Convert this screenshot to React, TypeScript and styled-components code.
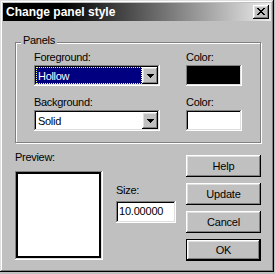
import React from "react";
import styled, { createGlobalStyle, css } from "styled-components";

const GlobalStyle = createGlobalStyle`
  html, body { margin: 0; padding: 0; background: #c0c0c0; }
  body { font-family: "Liberation Sans", Arial, sans-serif; font-size: 11px; color: #000; }
  * { box-sizing: border-box; }
`;

const raised = css`
  box-shadow: inset -1px -1px #000, inset 1px 1px #fff, inset -2px -2px #808080, inset 2px 2px #dfdfdf;
`;
const sunken = css`
  box-shadow: inset -1px -1px #fff, inset 1px 1px #808080, inset -2px -2px #dfdfdf, inset 2px 2px #000;
`;

const Window = styled.div`
  width: 274px;
  height: 272px;
  padding: 3px;
  background: #c0c0c0;
  box-shadow: inset -1px -1px #000, inset 1px 1px #dfdfdf, inset -2px -2px #808080, inset 2px 2px #fff;
  display: flex;
  flex-direction: column;
`;

const TitleBar = styled.div`
  height: 18px;
  display: flex;
  align-items: center;
  justify-content: space-between;
  padding: 0 2px 0 3px;
  background: linear-gradient(to right, #000 0%, #000 22%, #ececec 100%);
`;

const Title = styled.span`
  color: #fff;
  font: bold 12px/18px "Liberation Sans", Arial, sans-serif;
`;

const CloseButton = styled.div`
  width: 16px;
  height: 14px;
  background: #c0c0c0;
  ${raised};
  display: flex;
  align-items: center;
  justify-content: center;
  padding: 0 1px 1px 0;
`;

const Body = styled.div`
  padding: 21px 12px 0 12px;
  display: flex;
  flex-direction: column;
`;

const Group = styled.div`
  position: relative;
  width: 246px;
  height: 101px;
  border: 1px solid #808080;
  box-shadow: inset 1px 1px #fff, 1px 1px #fff;
  padding: 8px 0 0 18px;
`;

const Legend = styled.span`
  position: absolute;
  top: -9px;
  left: 5px;
  padding: 0 2px;
  background: #c0c0c0;
  line-height: 13px;
  letter-spacing: -0.3px;
`;

const FieldGrid = styled.div`
  display: grid;
  grid-template-columns: 126px 56px;
  column-gap: 26px;
  row-gap: 10px;
`;

const Field = styled.div<{ $gap?: number }>`
  display: flex;
  flex-direction: column;
  gap: ${(p) => p.$gap ?? 1}px;
`;

const Label = styled.span`
  display: block;
  height: 13px;
  line-height: 13px;
  letter-spacing: -0.3px;
  white-space: nowrap;
`;

const Combo = styled.div`
  width: 126px;
  height: 21px;
  padding: 2px;
  background: #fff;
  ${sunken};
  display: flex;
`;

const ComboValue = styled.div<{ $selected?: boolean }>`
  flex: 1;
  display: flex;
  align-items: center;
  padding-left: 1px;
  letter-spacing: -0.3px;
  border: 1px ${(p) => (p.$selected ? "dotted #ffff80" : "solid transparent")};
  background: ${(p) => (p.$selected ? "#000080" : "#fff")};
  color: ${(p) => (p.$selected ? "#fff" : "#000")};
`;

const DropButton = styled.div`
  width: 16px;
  background: #c0c0c0;
  ${raised};
  display: flex;
  align-items: center;
  justify-content: center;
  padding-top: 1px;
`;

const Swatch = styled.div<{ $color: string }>`
  width: 56px;
  height: 21px;
  background: ${(p) => p.$color};
  ${sunken};
`;

const BottomRow = styled.div`
  margin-top: 8px;
  display: grid;
  grid-template-columns: 91px 60px 75px;
  column-gap: 10px;
`;

const PreviewFrame = styled.div`
  width: 88px;
  height: 89px;
  padding: 2px;
  background: #fff;
  ${sunken};
  display: flex;
`;

const PreviewPanel = styled.div`
  flex: 1;
  border: 1px solid #000;
  border-right-width: 2px;
  border-bottom-width: 2px;
  background: #fff;
`;

const SizeColumn = styled(Field)`
  padding-top: 33px;
`;

const TextField = styled.div`
  width: 60px;
  height: 22px;
  padding: 3px 0 0 3px;
  background: #fff;
  ${sunken};
  line-height: 15px;
  letter-spacing: -0.2px;
`;

const ButtonColumn = styled.div`
  padding-top: 4px;
  display: flex;
  flex-direction: column;
  gap: 6px;
`;

const Button = styled.div<{ $default?: boolean }>`
  width: 75px;
  height: 22px;
  background: #c0c0c0;
  display: flex;
  align-items: center;
  justify-content: center;
  letter-spacing: -0.2px;
  ${(p) =>
    p.$default
      ? css`
          border: 1px solid #000;
          box-shadow: inset -1px -1px #000, inset 1px 1px #fff, inset -2px -2px #808080, inset 2px 2px #dfdfdf;
        `
      : raised};
`;

const CloseGlyph = () => (
  <svg width="8" height="7" viewBox="0 0 8 7" shapeRendering="crispEdges">
    <path
      d="M0 0h2v1H0zM6 0h2v1H6zM1 1h2v1H1zM5 1h2v1H5zM2 2h4v1H2zM3 3h2v1H3zM2 4h4v1H2zM1 5h2v1H1zM5 5h2v1H5zM0 6h2v1H0zM6 6h2v1H6z"
      fill="#000"
    />
  </svg>
);

const Arrow = () => (
  <svg width="7" height="4" viewBox="0 0 7 4" shapeRendering="crispEdges">
    <path d="M0 0h7v1H0zM1 1h5v1H1zM2 2h3v1H2zM3 3h1v1H3z" fill="#000" />
  </svg>
);

const ComboBox = ({ value, selected }: { value: string; selected?: boolean }) => (
  <Combo>
    <ComboValue $selected={selected}>{value}</ComboValue>
    <DropButton>
      <Arrow />
    </DropButton>
  </Combo>
);

export default function App() {
  return (
    <>
      <GlobalStyle />
      <Window>
        <TitleBar>
          <Title>Change panel style</Title>
          <CloseButton>
            <CloseGlyph />
          </CloseButton>
        </TitleBar>
        <Body>
          <Group>
            <Legend>Panels</Legend>
            <FieldGrid>
              <Field>
                <Label>Foreground:</Label>
                <ComboBox value="Hollow" selected />
              </Field>
              <Field>
                <Label>Color:</Label>
                <Swatch $color="#000" />
              </Field>
              <Field>
                <Label>Background:</Label>
                <ComboBox value="Solid" />
              </Field>
              <Field>
                <Label>Color:</Label>
                <Swatch $color="#fff" />
              </Field>
            </FieldGrid>
          </Group>
          <BottomRow>
            <Field $gap={7}>
              <Label>Preview:</Label>
              <PreviewFrame>
                <PreviewPanel />
              </PreviewFrame>
            </Field>
            <SizeColumn $gap={4}>
              <Label>Size:</Label>
              <TextField>10.00000</TextField>
            </SizeColumn>
            <ButtonColumn>
              <Button>Help</Button>
              <Button>Update</Button>
              <Button>Cancel</Button>
              <Button $default>OK</Button>
            </ButtonColumn>
          </BottomRow>
        </Body>
      </Window>
    </>
  );
}
